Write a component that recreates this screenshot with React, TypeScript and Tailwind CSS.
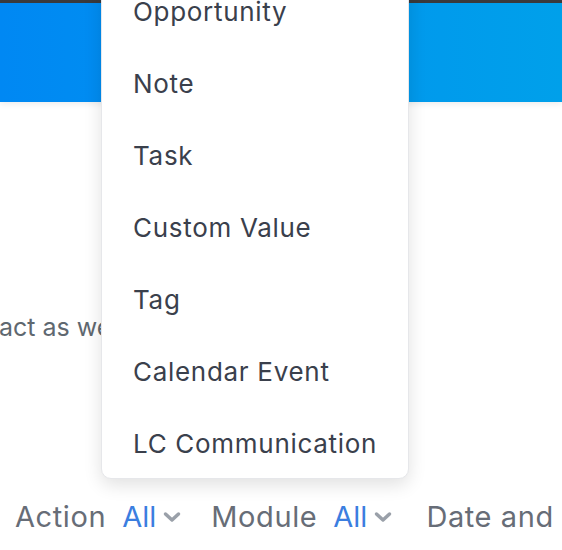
import React from 'react';

const items = ['Opportunity', 'Note', 'Task', 'Custom Value', 'Tag', 'Calendar Event', 'LC Communication'];

const Chevron = () => (
  <svg width="20" height="20" viewBox="0 0 20 20" className="text-[#9aa0a9]">
    <path d="M3.5 7l6.5 6 6.5-6" fill="none" stroke="currentColor" strokeWidth="3.5" strokeLinecap="round" strokeLinejoin="round" />
  </svg>
);

const FilterItem = ({ label }: { label: string }) => (
  <div className="flex items-center">
    <span className="text-[#676d77]">{label}</span>
    <span className="ml-[16px] text-[#3b7ee0] tracking-[0px]">All</span>
    <span className="ml-[6px] mt-[2px]">
      <Chevron />
    </span>
  </div>
);

const App = () => {
  return (
    <div
      className="relative h-[550px] w-[562px] overflow-hidden bg-white"
      style={{ fontFamily: 'Inter, "Noto Sans", sans-serif' }}
    >
      <div className="h-[3px] bg-[#3b3b3d]" />
      <div className="h-[99px] bg-gradient-to-r from-[#0088f3] to-[#00a0ea] shadow-[0_2px_6px_rgba(0,0,0,0.08)]" />

      <div className="mt-[207px] -ml-[1px] text-[25px] tracking-[0px] text-[#5f6870] whitespace-nowrap">
        act as well as any other records
      </div>

      <div className="mt-[148px] flex items-center gap-[29px] pl-[15px] text-[29px] tracking-[0.6px] whitespace-nowrap">
        <FilterItem label="Action" />
        <FilterItem label="Module" />
        <span className="ml-[4px] text-[#676d77]">Date and time</span>
      </div>

      <div className="absolute left-[101px] top-[-26px] h-[505px] w-[308px] overflow-hidden rounded-b-[10px] border border-[#e6e7ea] bg-white shadow-[0_6px_18px_rgba(0,0,0,0.12)]">
        {items.map((item) => (
          <div key={item} className="flex h-[72px] shrink-0 items-center pl-[31px] text-[26px] text-[#3a404c] tracking-[0.7px]">
            {item}
          </div>
        ))}
      </div>
    </div>
  );
};

export default App;
